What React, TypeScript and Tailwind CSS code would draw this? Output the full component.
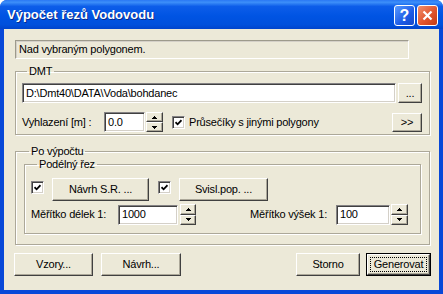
import React from 'react';

// Classic Win32 bevels
const raised =
  'bg-[#ece9d8] border border-t-white border-l-white border-b-[#404040] border-r-[#404040] shadow-[inset_-1px_-1px_0_#aca899]';
const sunken =
  'bg-white border border-t-[#848284] border-l-[#848284] border-b-white border-r-white shadow-[inset_1px_1px_0_#404040,inset_-1px_-1px_0_#d4d0c8]';
const groupBox =
  'border border-[#aca899] shadow-[1px_1px_0_#fff,inset_1px_1px_0_#fff] min-w-0';

function Button({ label, className = '' }: { label: string; className?: string }) {
  return (
    <div className={`${raised} flex items-center justify-center ${className}`}>
      <span>{label}</span>
    </div>
  );
}

function Spinner({ className = '' }: { className?: string }) {
  return (
    <div className={`flex flex-col ${className}`}>
      <div className={`${raised} flex-1 flex items-center justify-center`}>
        <svg width="5" height="3" viewBox="0 0 5 3">
          <path d="M2 0h1v1h1v1h1v1H0V2h1V1h1z" fill="#000" />
        </svg>
      </div>
      <div className={`${raised} flex-1 flex items-center justify-center`}>
        <svg width="5" height="3" viewBox="0 0 5 3">
          <path d="M0 0h5v1H4v1H3v1H2V2H1V1H0z" fill="#000" />
        </svg>
      </div>
    </div>
  );
}

function Check({ className = '' }: { className?: string }) {
  return (
    <div className={`w-[13px] h-[13px] shrink-0 ${sunken} bg-[#f4f3ee] flex items-center justify-center ${className}`}>
      <svg width="7" height="7" viewBox="0 0 7 7">
        <path d="M0.5 3.2 L2.6 5.3 L6.5 1.2" stroke="#000" strokeWidth="1.8" fill="none" />
      </svg>
    </div>
  );
}

function NumField({ value, className = '' }: { value: string; className?: string }) {
  return (
    <div className={`${sunken} h-[20px] flex items-center pl-[3px] ${className}`}>
      {value}
    </div>
  );
}

export default function App() {
  return (
    <div className="w-[443px] h-[294px] flex flex-col bg-[#0848d8] rounded-t-[7px] overflow-hidden [font-family:'Liberation_Sans',Arial,sans-serif] text-[11px] leading-[13px] text-black">
      {/* title bar */}
      <div className="h-[29px] shrink-0 flex items-center pl-[7px] pr-[5px] bg-[linear-gradient(to_bottom,#2a78f4_0%,#3d8ff9_8%,#0d5de9_22%,#0054e3_55%,#0050dc_85%,#0044cc_100%)]">
        <span className="text-white font-bold text-[13px] [text-shadow:1px_1px_0_#0a2a8a]">
          Výpočet řezů Vodovodu
        </span>
        <div className="ml-auto flex gap-[2px] mt-[2px]">
          <div className="w-[21px] h-[21px] rounded-[3px] border border-white bg-[linear-gradient(135deg,#5a9bff,#1c5be6_60%,#1548c8)] flex items-center justify-center text-white font-bold text-[16px]">
            ?
          </div>
          <div className="w-[21px] h-[21px] rounded-[3px] border border-white bg-[linear-gradient(135deg,#f0906c,#e1552e_55%,#c23a14)] flex items-center justify-center">
            <svg width="11" height="11" viewBox="0 0 11 11">
              <path d="M1.5 1.5 L9.5 9.5 M9.5 1.5 L1.5 9.5" stroke="#fff" strokeWidth="2.2" />
            </svg>
          </div>
        </div>
      </div>

      {/* client area */}
      <div className="flex-1 mx-[4px] mb-[4px] bg-[#ece9d8] flex flex-col pl-[11px] pr-[9px] pt-[11px] tracking-[-0.2px]">
        <div className="w-[394px] h-[19px] flex items-center pl-[3px] border border-t-[#9d9a8c] border-l-[#9d9a8c] border-b-white border-r-white shadow-[inset_1px_1px_0_#d4d0c8]">
          Nad vybraným polygonem.
        </div>

        <fieldset className={`${groupBox} mt-[6px] pl-[6px] pr-[7px] pb-[2px]`}>
          <legend className="ml-[5px] px-[2px]">DMT</legend>
          <div className="flex mt-[5px]">
            <div className={`${sunken} flex-1 h-[20px] flex items-center pl-[3px]`}>D:\Dmt40\DATA\Voda\bohdanec</div>
            <Button label="..." className="ml-[2px] w-[24px] h-[20px]" />
          </div>
          <div className="flex items-center mt-[9px]">
            <span className="w-[82px]">Vyhlazení [m] :</span>
            <NumField value="0.0" className="w-[41px]" />
            <Spinner className="ml-[1px] w-[17px] h-[20px]" />
            <Check className="ml-[9px]" />
            <span className="ml-[4px]">Průsečíky s jinými polygony</span>
            <Button label=">>" className="ml-auto w-[30px] h-[19px]" />
          </div>
        </fieldset>

        <fieldset className={`${groupBox} mt-[10px] px-[8px] pb-[10px]`}>
          <legend className="ml-[5px] px-[2px]">Po výpočtu</legend>
          <fieldset className={`${groupBox} pl-[6px] pr-[12px] pb-[8px]`}>
            <legend className="ml-[6px] px-[2px]">Podélný řez</legend>
            <div className="flex items-start mt-[7px]">
              <Check className="mt-[3px]" />
              <Button label="Návrh S.R. ..." className="ml-[8px] w-[97px] h-[23px]" />
              <Check className="ml-[9px] mt-[3px]" />
              <Button label="Svisl.pop. ..." className="ml-[8px] w-[89px] h-[23px]" />
            </div>
            <div className="flex items-center mt-[3px]">
              <span className="w-[87px]">Měřítko délek 1:</span>
              <NumField value="1000" className="w-[60px]" />
              <Spinner className="ml-[2px] w-[16px] h-[21px]" />
              <span className="ml-auto mr-[9px]">Měřítko výšek 1:</span>
              <NumField value="100" className="w-[54px]" />
              <Spinner className="ml-[1px] w-[17px] h-[21px]" />
            </div>
          </fieldset>
        </fieldset>

        <div className="flex mt-[8px] -ml-[1px]">
          <Button label="Vzory..." className="w-[79px] h-[23px]" />
          <Button label="Návrh..." className="ml-[8px] w-[80px] h-[23px]" />
          <Button label="Storno" className="ml-auto w-[64px] h-[23px]" />
          <div className="ml-[6px] w-[65px] h-[23px] border border-black mr-[-1px]">
            <div className={`${raised} w-full h-full flex p-[2px]`}>
              <div className="flex-1 flex items-center justify-center border border-dotted border-black">
                Generovat
              </div>
            </div>
          </div>
        </div>
      </div>
    </div>
  );
}
